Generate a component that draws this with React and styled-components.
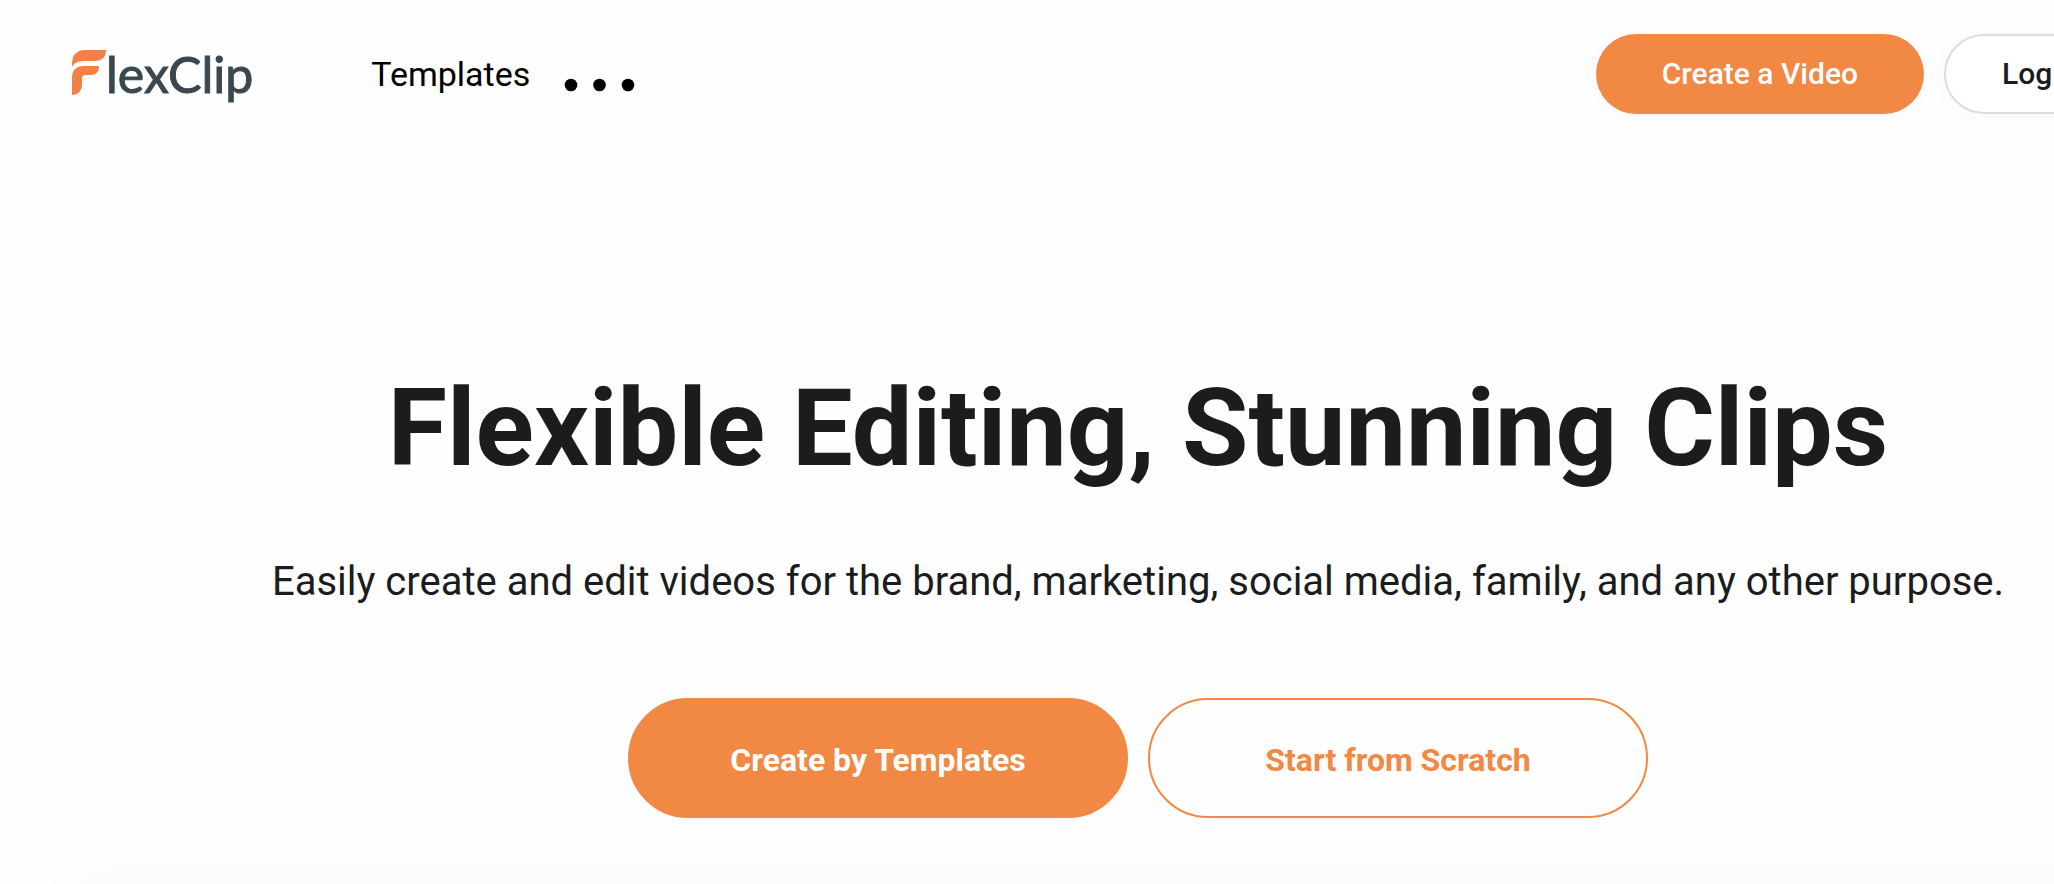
import React from 'react';
import styled, { createGlobalStyle } from 'styled-components';

export default function App() {
    return (
        <>
            <GlobalStyle />
            <Page>
                <Header>
                    <Brand href="#" aria-label="FlexClip">
                        <svg width="34" height="48" viewBox="0 0 34 48" aria-hidden="true">
                            <path d="M0 17V14C0 5 5 0 13 0H34C34 7 30 11 23 11H13C6 11 2 13 0 17Z" />
                            <path d="M0 45V28C0 20 4 16 12 16H27C27 22 24 25 18 25H14C11 25 10 26 10 29V34C10 41 6 45 0 45Z" />
                        </svg>
                        <span>lexClip</span>
                    </Brand>
                    <Nav>
                        <NavLink href="#templates">Templates</NavLink>
                        <MoreButton type="button" aria-label="More">
                            <svg width="72" height="14" viewBox="0 0 72 14" aria-hidden="true">
                                <circle cx="7" cy="7" r="6.3" />
                                <circle cx="35.5" cy="7" r="6.3" />
                                <circle cx="64" cy="7" r="6.3" />
                            </svg>
                        </MoreButton>
                    </Nav>
                    <Actions>
                        <HeaderButton type="button" $primary>Create a Video</HeaderButton>
                        <HeaderButton type="button">Log</HeaderButton>
                    </Actions>
                </Header>
                <Hero>
                    <Title>Flexible Editing, Stunning Clips</Title>
                    <Subtitle>Easily create and edit videos for the brand, marketing, social media, family, and any other purpose.</Subtitle>
                    <ButtonRow>
                        <HeroButton type="button" $primary>Create by Templates</HeroButton>
                        <HeroButton type="button">Start from Scratch</HeroButton>
                    </ButtonRow>
                </Hero>
                <Preview />
            </Page>
        </>
    )
}

const GlobalStyle = createGlobalStyle`
    * {
        box-sizing: border-box;
    }
    body {
        margin: 0;
        overflow: hidden;
        background-color: #fefefe;
        font-family: Roboto, "Liberation Sans", sans-serif;
        color: #1b1c1d;
    }
    button {
        font-family: inherit;
        cursor: pointer;
    }
`;

const Page = styled.div`
    display: flex;
    flex-direction: column;
    min-width: 2276px;
    height: 100vh;
    overflow: hidden;
`;

const Header = styled.header`
    display: flex;
    align-items: center;
    flex-shrink: 0;
    padding: 34px 132px 0 72px;
`;

const Brand = styled.a`
    display: flex;
    align-items: center;
    height: 80px;
    color: #394850;
    text-decoration: none;
    svg {
        fill: #f28044;
    }
    span {
        font-family: Lato, "Liberation Sans", sans-serif;
        font-size: 50px;
        line-height: 80px;
        -webkit-text-stroke: 1px #394850;
    }
`;

const Nav = styled.nav`
    display: flex;
    align-items: center;
    gap: 34px;
    flex: 1;
    margin-left: 118px;
`;

const NavLink = styled.a`
    font-size: 34px;
    line-height: 80px;
    color: #000;
    text-decoration: none;
`;

const MoreButton = styled.button`
    display: flex;
    padding: 22px 0 0;
    border: none;
    background: transparent;
`;

const Actions = styled.div`
    display: flex;
    gap: 20px;
`;

const HeaderButton = styled.button`
    width: ${({ $primary }) => ($primary ? 'auto' : '200px')};
    height: 80px;
    padding: 0 ${({ $primary }) => ($primary ? '66px' : '56px')} 2px;
    border: ${({ $primary }) => ($primary ? 'none' : '2px solid #d8dddf')};
    border-radius: 40px;
    background-color: ${({ $primary }) => ($primary ? '#f18844' : '#fff')};
    color: ${({ $primary }) => ($primary ? '#fff' : '#1b1c1d')};
    box-shadow: 0 2px 20px rgba(60, 90, 220, 0.03);
    font-size: 30px;
    font-weight: 500;
    text-align: left;
`;

const Hero = styled.main`
    display: flex;
    flex-direction: column;
    align-items: center;
    flex-shrink: 0;
    padding-top: 248px;
    text-align: center;
`;

const Title = styled.h1`
    margin: 0;
    font-size: 108px;
    font-weight: 700;
    line-height: 132px;
`;

const Subtitle = styled.p`
    margin: 58px 0 0;
    font-size: 40px;
    line-height: 60px;
`;

const ButtonRow = styled.div`
    display: flex;
    gap: 20px;
    margin-top: 86px;
`;

const HeroButton = styled.button`
    width: 500px;
    height: 120px;
    padding: 4px 0 0;
    border: 2px solid #f18844;
    border-radius: 60px;
    background-color: ${({ $primary }) => ($primary ? '#f18844' : 'transparent')};
    color: ${({ $primary }) => ($primary ? '#fff' : '#f18844')};
    font-size: 32px;
    font-weight: 700;
`;

const Preview = styled.section`
    flex-shrink: 0;
    height: 800px;
    margin: 80px 72px 0;
    border-radius: 20px;
    background-color: #fff;
    box-shadow: 0 0 80px rgba(0, 0, 0, 0.04);
`;
